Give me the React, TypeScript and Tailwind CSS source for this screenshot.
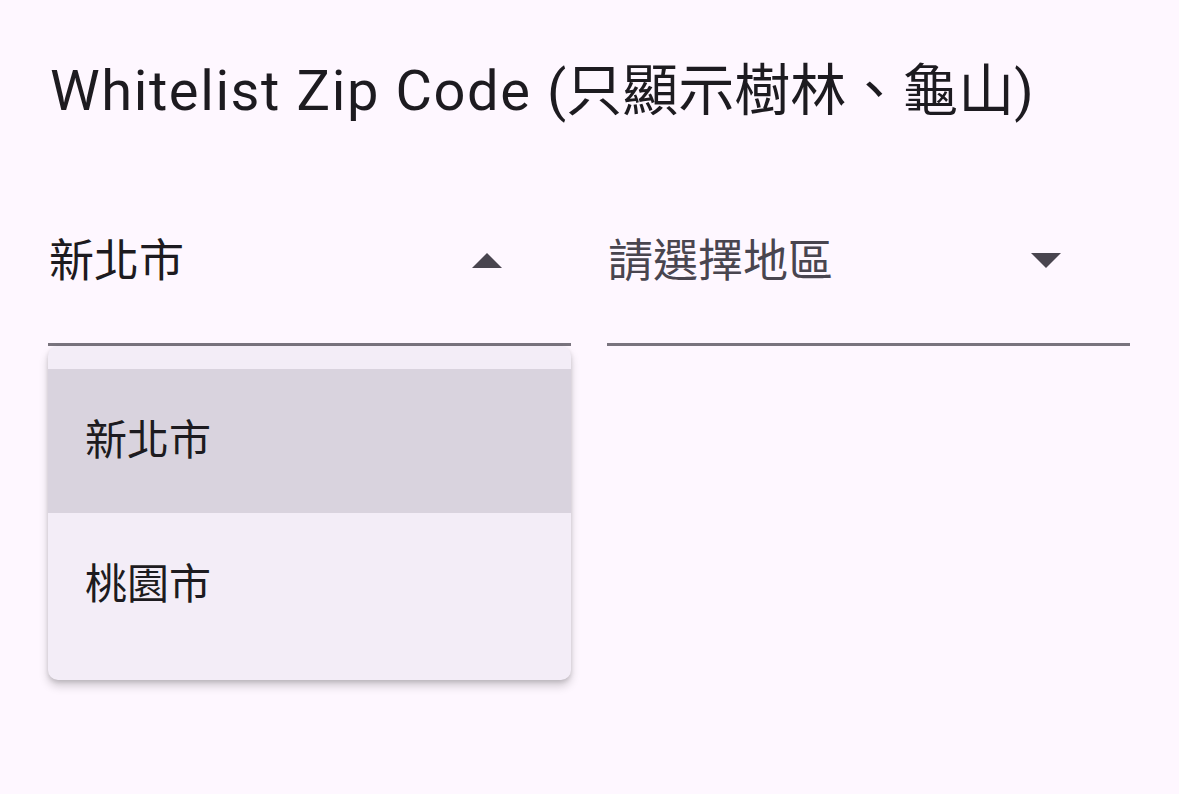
import { useState } from "react";

const FONT = "font-['Roboto','Noto_Sans_CJK_TC',sans-serif]";

interface Option {
	value: string;
	label: string;
}

const cities: Option[] = [
	{ value: "new-taipei", label: "新北市" },
	{ value: "taoyuan", label: "桃園市" },
];

function Caret({ up }: { up: boolean }) {
	return (
		<svg width="30" height="16" viewBox="0 0 30 16" className="shrink-0">
			{up ? (
				<polygon points="0,15 15,0 30,15" fill="#49454f" />
			) : (
				<polygon points="0,0 30,0 15,15" fill="#49454f" />
			)}
		</svg>
	);
}

function DropdownField({
	text,
	placeholder,
	open,
	children,
}: {
	text?: string;
	placeholder: string;
	open: boolean;
	children?: React.ReactNode;
}) {
	return (
		<div className="relative w-[523px]">
			<div className="flex h-[147px] items-center border-b-[3px] border-[#79747e] pb-[20px]">
				<span
					className={`flex-1 pl-[1px] text-[45px] leading-[45px] ${
						text ? "text-[#1d1b20]" : "text-[#49454f]"
					}`}
				>
					{text ?? placeholder}
				</span>
				<div className="mr-[69px]">
					<Caret up={open} />
				</div>
			</div>
			{children}
		</div>
	);
}

export default function App() {
	const [selected] = useState("new-taipei");

	return (
		<div
			className={`${FONT} min-h-[794px] w-full bg-[#fef7ff] px-[48px] pt-[63px] text-[#1d1b20]`}
		>
			<h1 className="pl-[2px] text-[56px] font-normal leading-[56px]">
				<span className="tracking-[1.6px]">Whitelist Zip Code </span>
				<span>(只顯示樹林、龜山)</span>
			</h1>

			<div className="mt-[80px] flex gap-[36px]">
				<DropdownField text="新北市" placeholder="請選擇城市" open>
					<div className="absolute left-0 top-full z-10 w-full overflow-hidden rounded-[10px] bg-[#f3edf7] py-[23px] shadow-[0_6px_10px_rgba(0,0,0,0.18),0_2px_4px_rgba(0,0,0,0.12)]">
						{cities.map((city) => (
							<div
								key={city.value}
								className={`flex h-[144px] items-center pl-[37px] text-[42px] leading-[42px] ${
									city.value === selected ? "bg-[#d9d3de]" : ""
								}`}
							>
								{city.label}
							</div>
						))}
					</div>
				</DropdownField>

				<DropdownField placeholder="請選擇地區" open={false} />
			</div>
		</div>
	);
}
